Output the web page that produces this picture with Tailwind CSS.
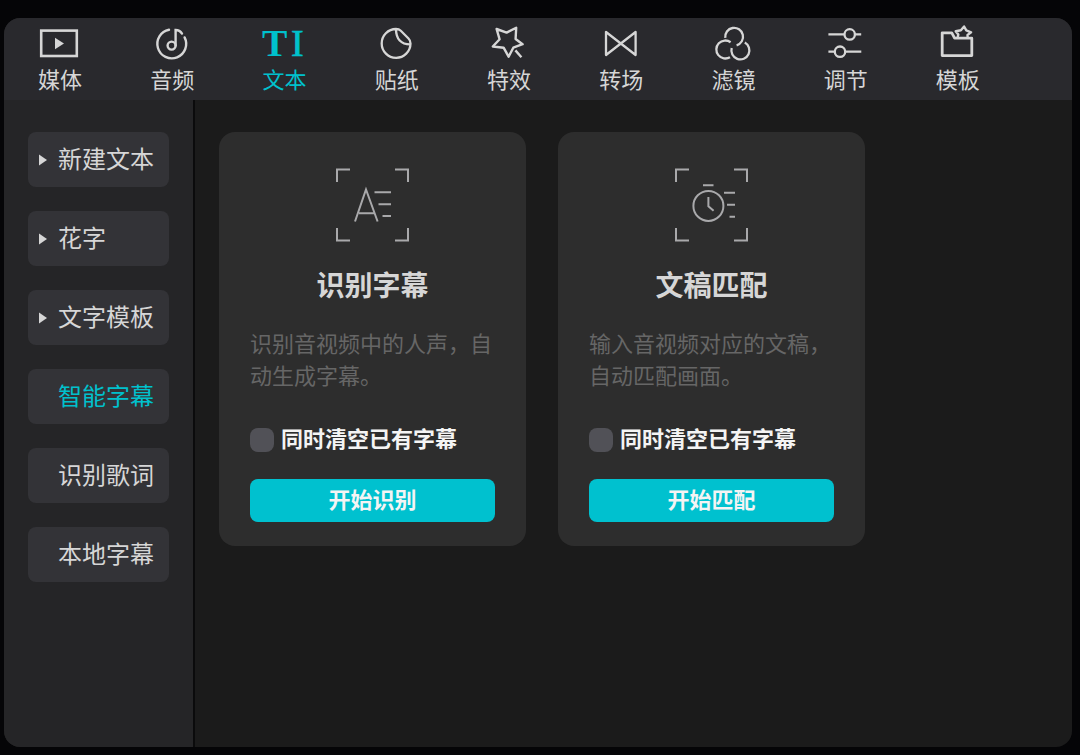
<!DOCTYPE html>
<html lang="zh-CN">
<head>
  <meta charset="UTF-8">
  <title>智能字幕</title>
  <meta name="viewport" content="width=device-width, initial-scale=1.0">
  <script src="https://cdn.jsdelivr.net/npm/@tailwindcss/browser@4"></script>
</head>
<body class="bg-[#050507] min-h-screen flex flex-col pt-[18px] pb-2 pl-1 pr-2 font-['Noto_Sans_CJK_SC',sans-serif] text-[#d6d6d6]">
  <div class="flex-1 flex flex-col rounded-2xl overflow-hidden bg-[#1b1b1b]">

    <!-- top tabs -->
    <nav class="flex bg-[#29292d] pt-2 pb-2 pr-[58px] text-[22px] leading-7">
      <button class="flex-1 flex flex-col items-center gap-[2px]">
        <svg class="w-12 h-9" viewBox="0 0 48 36" fill="none" stroke="currentColor" stroke-width="2.6">
          <rect x="5.2" y="4.6" width="35.6" height="25.4" />
          <path d="M19 11.8v11.4l9-5.7z" fill="currentColor" stroke="none" />
        </svg>
        <span>媒体</span>
      </button>
      <button class="flex-1 flex flex-col items-center gap-[2px]">
        <svg class="w-12 h-9" viewBox="0 0 48 36" fill="none" stroke="currentColor" stroke-width="2.4" stroke-linecap="round">
          <path d="M21 3.8A14.4 14.4 0 1 0 36.6 11.4" />
          <circle cx="23.6" cy="19.6" r="4" />
          <path d="M27.6 19.6V4C30.4 4 32.6 5.4 34 7.6" />
        </svg>
        <span>音频</span>
      </button>
      <button class="flex-1 flex flex-col items-center gap-[2px] text-[#00c1cd]">
        <svg class="w-12 h-9 overflow-visible" viewBox="0 0 48 36" fill="currentColor" font-family="Liberation Serif, serif" font-size="38">
          <text x="1" y="30" font-weight="bold">T</text>
          <text x="30" y="30" stroke="currentColor" stroke-width="0.7">I</text>
        </svg>
        <span>文本</span>
      </button>
      <button class="flex-1 flex flex-col items-center gap-[2px]">
        <svg class="w-12 h-9" viewBox="0 0 48 36" fill="none" stroke="currentColor" stroke-width="2.3" stroke-linejoin="round">
          <path d="M23 3A14.4 14.4 0 1 0 37.5 17.5C37.5 15.5 37 14 35.5 12.5L27.8 4.8C26.4 3.4 25 3 23 3z" />
          <path d="M23 3C23 13 28 18.6 37.5 18.4" />
        </svg>
        <span>贴纸</span>
      </button>
      <button class="flex-1 flex flex-col items-center gap-[2px]">
        <svg class="w-12 h-9" viewBox="0 0 48 36" fill="none" stroke="currentColor" stroke-width="2.4" stroke-linejoin="round">
          <path d="M11.6 3l10 3.6 9.6-4.8-.6 11.2 7 5.2-9.3 3.5-4.7 9-5-9-10.8-1.2 6.8-7.2z" />
          <path d="M30.4 24.4l6 6.8" />
        </svg>
        <span>特效</span>
      </button>
      <button class="flex-1 flex flex-col items-center gap-[2px]">
        <svg class="w-12 h-9" viewBox="0 0 48 36" fill="none" stroke="currentColor" stroke-width="2.3" stroke-linejoin="round">
          <path d="M9 6v23L38.6 6v23z" />
        </svg>
        <span>转场</span>
      </button>
      <button class="flex-1 flex flex-col items-center gap-[2px]">
        <svg class="w-12 h-9" viewBox="0 0 48 36" fill="none" stroke="currentColor" stroke-width="2.3">
          <path d="M16.3 11.9A8.9 8.9 0 1 1 27.6 19.3" />
          <path d="M21.6 16.2A9 9 0 1 0 21 31.2" />
          <path d="M22.7 22A9 9 0 1 0 35.8 16.6" />
        </svg>
        <span>滤镜</span>
      </button>
      <button class="flex-1 flex flex-col items-center gap-[2px]">
        <svg class="w-12 h-9" viewBox="0 0 48 36" fill="none" stroke="currentColor" stroke-width="2.3">
          <path d="M6.4 8.4h16M33 8.4h6.2M6.4 25.7h6.3M23.3 25.7h16" />
          <circle cx="27.7" cy="8.4" r="5.2" />
          <circle cx="18" cy="25.7" r="5.2" />
        </svg>
        <span>调节</span>
      </button>
      <button class="flex-1 flex flex-col items-center gap-[2px]">
        <svg class="w-12 h-9 overflow-visible" viewBox="0 0 48 36" fill="none" stroke="currentColor" stroke-width="2.8" stroke-linejoin="round">
          <path d="M8.2 6.8h9.6l2.8 5.4h17.2v17.4H8.2z" />
          <path d="M23.6 11.8l.7-3.2-2.6-3.4 5.2-.9 3.2-3.8 2.2 3.9 4.8 2-3.6 2.6.2 2.8" stroke-width="2.4" />
        </svg>
        <span>模板</span>
      </button>
    </nav>

    <div class="flex-1 flex">
      <!-- sidebar -->
      <aside class="w-[191px] shrink-0 flex flex-col gap-6 bg-[#252527] border-r-2 border-[#0b0b0c] pt-8 pl-6 pr-6 text-2xl leading-[51px]">
        <button class="flex items-center rounded-lg bg-[#333337] pl-[11px] whitespace-nowrap">
          <svg class="w-2 h-3 mr-[11px] shrink-0" viewBox="0 0 8 12" fill="currentColor"><path d="M0 .5v11L8 6z" /></svg>
          <span class="pb-1">新建文本</span>
        </button>
        <button class="flex items-center rounded-lg bg-[#333337] pl-[11px] whitespace-nowrap">
          <svg class="w-2 h-3 mr-[11px] shrink-0" viewBox="0 0 8 12" fill="currentColor"><path d="M0 .5v11L8 6z" /></svg>
          <span class="pb-1">花字</span>
        </button>
        <button class="flex items-center rounded-lg bg-[#333337] pl-[11px] whitespace-nowrap">
          <svg class="w-2 h-3 mr-[11px] shrink-0" viewBox="0 0 8 12" fill="currentColor"><path d="M0 .5v11L8 6z" /></svg>
          <span class="pb-1">文字模板</span>
        </button>
        <button class="flex items-center rounded-lg bg-[#333337] pl-[30px] pb-1 whitespace-nowrap text-[#00c1cd]">智能字幕</button>
        <button class="flex items-center rounded-lg bg-[#333337] pl-[30px] pb-1 whitespace-nowrap">识别歌词</button>
        <button class="flex items-center rounded-lg bg-[#333337] pl-[30px] pb-1 whitespace-nowrap">本地字幕</button>
      </aside>

      <!-- cards -->
      <main class="flex-1 flex items-start gap-8 pt-8 pl-6">
        <section class="w-[307px] flex flex-col rounded-2xl bg-[#2d2d2d] px-[31px] pt-9 pb-6">
          <svg class="w-[73px] h-[74px] self-center" viewBox="0 0 73 74" fill="none" stroke="#a9a9ab" stroke-width="2">
            <path d="M1 14V1.5H14M59 1.5h13V14M72 60v12.5H59M14 72.5H1V60" />
            <path d="M19 53.5L30 21.5L41.6 53.5M23 45.2h15.2" />
            <path d="M38.5 24.3H55M42.5 36.2H55M46.5 47.9H55" />
          </svg>
          <h2 class="mt-[22px] text-center text-[28px] leading-10 font-bold">识别字幕</h2>
          <p class="mt-[22px] text-[22px] leading-8 text-[#666666]">识别音视频中的人声，自动生成字幕。</p>
          <label class="mt-[38px] flex items-center gap-[7px] text-[22px] leading-[18px] font-bold text-[#f4f4f4] whitespace-nowrap">
            <input type="checkbox" class="appearance-none w-6 h-6 rounded-lg bg-[#515157] checked:bg-[#00c1cd]">
            <span class="pb-[6px]">同时清空已有字幕</span>
          </label>
          <button class="mt-[27px] pb-1 rounded-lg bg-[#00c1cf] text-[22px] leading-[39px] font-bold text-[#f4f4f4]">开始识别</button>
        </section>

        <section class="w-[307px] flex flex-col rounded-2xl bg-[#2d2d2d] px-[31px] pt-9 pb-6">
          <svg class="w-[73px] h-[74px] self-center" viewBox="0 0 73 74" fill="none" stroke="#a9a9ab" stroke-width="2">
            <path d="M1 14V1.5H14M59 1.5h13V14M72 60v12.5H59M14 72.5H1V60" />
            <circle cx="33.4" cy="37.9" r="15" />
            <path d="M28 17.3h10.5M33.4 29v9.2l5.2 4.6M49 24.8h11M52 36.8h8M54.5 48.8H60" />
          </svg>
          <h2 class="mt-[22px] text-center text-[28px] leading-10 font-bold">文稿匹配</h2>
          <p class="mt-[22px] text-[22px] leading-8 text-[#666666]">输入音视频对应的文稿，自动匹配画面。</p>
          <label class="mt-[38px] flex items-center gap-[7px] text-[22px] leading-[18px] font-bold text-[#f4f4f4] whitespace-nowrap">
            <input type="checkbox" class="appearance-none w-6 h-6 rounded-lg bg-[#515157] checked:bg-[#00c1cd]">
            <span class="pb-[6px]">同时清空已有字幕</span>
          </label>
          <button class="mt-[27px] pb-1 rounded-lg bg-[#00c1cf] text-[22px] leading-[39px] font-bold text-[#f4f4f4]">开始匹配</button>
        </section>
      </main>
    </div>
  </div>
</body>
</html>
